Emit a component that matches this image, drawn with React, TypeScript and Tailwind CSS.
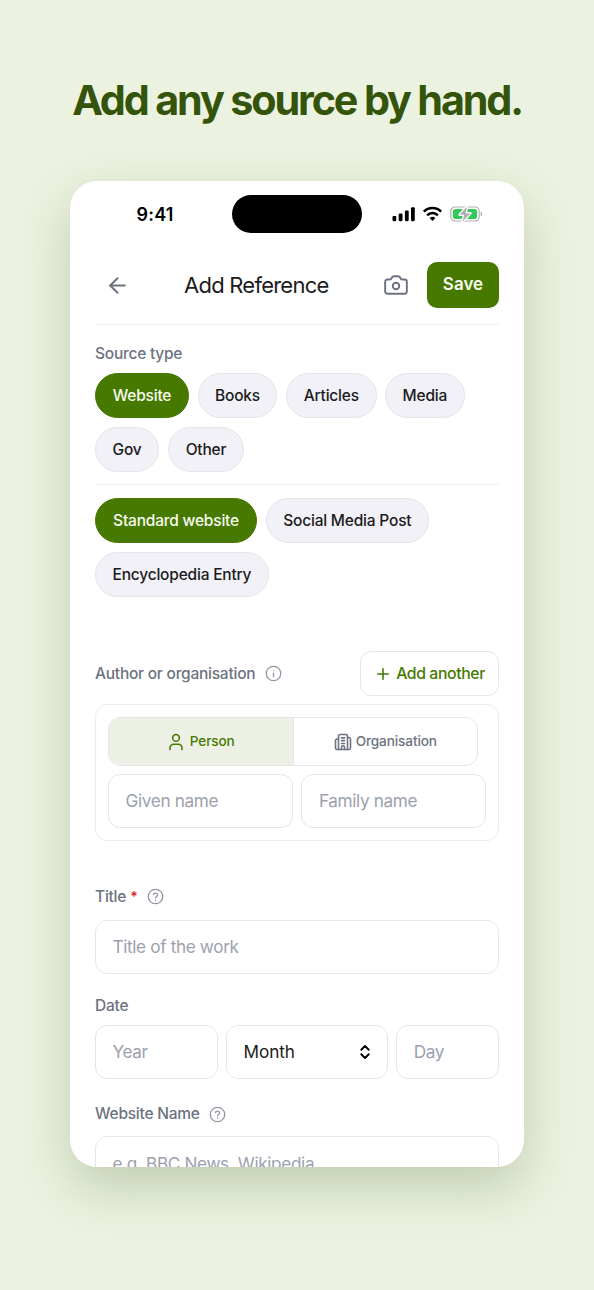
import type { ReactNode } from "react";
import { ArrowLeft, Camera, ChevronsUpDown, Plus } from "lucide-react";

function Chip({ label, className, active = false }: { label: string; className: string; active?: boolean }) {
  return (
    <button
      className={`flex h-[45px] shrink-0 items-center justify-center rounded-full border text-[15.5px] font-medium tracking-[-0.2px] whitespace-nowrap ${
        active ? "border-[#477900] bg-[#477900] text-[#f7fbef]" : "border-[#e4e4ea] bg-[#f2f1f8] text-[#1b1b20]"
      } ${className}`}
    >
      {label}
    </button>
  );
}

function Field({ children, className }: { children: ReactNode; className: string }) {
  return (
    <div
      className={`flex shrink-0 items-center rounded-[12px] border-[1.5px] border-[#e5e6e9] px-[16.5px] text-[17.2px] tracking-[-0.36px] whitespace-nowrap text-[#9ca1ae] ${className}`}
    >
      {children}
    </div>
  );
}

function Label({ children, className = "" }: { children: ReactNode; className?: string }) {
  return (
    <span className={`text-[15.5px] font-medium tracking-[-0.24px] whitespace-nowrap text-[#6c7280] ${className}`}>
      {children}
    </span>
  );
}

function HelpIcon() {
  return (
    <svg className="size-[17px]" viewBox="0 0 24 24" fill="none" stroke="#9196a2" strokeWidth="1.8" strokeLinecap="round" strokeLinejoin="round">
      <circle cx="12" cy="12" r="10.2" />
      <path d="M9.1 9.2a3 3 0 0 1 5.8 1c0 2-2.9 2.3-2.9 4" />
      <path d="M12 17.3h.01" />
    </svg>
  );
}

function InfoIcon() {
  return (
    <svg className="size-[17px]" viewBox="0 0 24 24" fill="none" stroke="#9196a2" strokeWidth="1.8" strokeLinecap="round">
      <circle cx="12" cy="12" r="10.2" />
      <path d="M12 16.5v-5M12 7.8h.01" />
    </svg>
  );
}

function PersonIcon() {
  return (
    <svg className="h-[18px] w-[18px]" viewBox="0 0 24 24" fill="none" stroke="currentColor" strokeWidth="2.1" strokeLinecap="round" strokeLinejoin="round">
      <circle cx="12" cy="6.5" r="4.5" />
      <path d="M4 22v-2a5 5 0 0 1 5-5h6a5 5 0 0 1 5 5v2" />
    </svg>
  );
}

function BuildingIcon() {
  return (
    <svg className="size-[18px]" viewBox="0 0 24 24" fill="none" stroke="currentColor" strokeWidth="2.1" strokeLinecap="round" strokeLinejoin="round">
      <path d="M6 22V4a2 2 0 0 1 2-2h8a2 2 0 0 1 2 2v18Z" />
      <path d="M6 8H4a2 2 0 0 0-2 2v10a2 2 0 0 0 2 2h2M18 6h2a2 2 0 0 1 2 2v12a2 2 0 0 1-2 2h-2M10 22v-3a2 2 0 0 1 4 0v3M10 6.5h4M10 10.2h4M10 14h4" />
    </svg>
  );
}

function StatusIcons() {
  return (
    <svg className="h-[18px] w-[92px]" viewBox="0 0 92 18">
      <rect x="0.5" y="11" width="3.8" height="5.2" rx="1.1" />
      <rect x="6.7" y="8.6" width="3.8" height="7.6" rx="1.1" />
      <rect x="12.9" y="5.4" width="3.8" height="10.8" rx="1.1" />
      <rect x="19" y="2.2" width="3.8" height="14" rx="1.1" />
      <g fill="none" stroke="#000" strokeWidth="2.5">
        <path d="M31.8 6.6a12.2 12.2 0 0 1 17.4 0" />
        <path d="M35.1 10.3a7.6 7.6 0 0 1 10.8 0" />
      </g>
      <path d="M37.6 13a4.3 4.3 0 0 1 5.8 0L40.5 16.1z" />
      <rect x="58.8" y="2" width="28.4" height="14" rx="4.4" fill="none" stroke="#b0b0b0" strokeWidth="1.2" />
      <rect x="60.9" y="4" width="24.2" height="10" rx="2.8" fill="#34c759" />
      <path d="M88.6 6.6c2.1.6 2.1 4.2 0 4.8z" fill="#b0b0b0" />
      <path d="M75 1.4 67.6 9.8h4.5L70.6 16.8 78.4 8.2H73.7z" fill="#b0b0b0" stroke="#fff" strokeWidth="2.6" strokeLinejoin="round" paintOrder="stroke" />
    </svg>
  );
}

export default function App() {
  return (
    <main className="flex h-[1290px] w-[594px] flex-col items-center overflow-hidden bg-[#ebf3e0] font-['Inter',sans-serif]">
      <h1 className="mt-[70px] h-[60px] text-[41.3px] leading-[60px] font-bold tracking-[-2.15px] whitespace-nowrap text-[#35540b]">
        Add any source by hand.
      </h1>

      <section className="mt-[51px] flex h-[986px] w-[454px] shrink-0 flex-col overflow-hidden rounded-[27px] bg-white px-[25px] shadow-[0_20px_52px_rgba(64,78,24,0.24)]">
        <div className="flex h-[66px] shrink-0 items-center">
          <span className="ml-[41.5px] w-[95.5px] text-[18px] font-semibold tracking-[0.2px] text-black">9:41</span>
          <div className="h-[38px] w-[130px] rounded-full bg-black" />
          <div className="ml-[29.5px]">
            <StatusIcons />
          </div>
        </div>

        <header className="flex h-[78px] shrink-0 items-center border-b border-[#f0f0f2] pb-[1px]">
          <ArrowLeft className="ml-[9.5px] size-[25px] text-[#6c7280]" strokeWidth={1.9} />
          <h2 className="ml-[54.5px] w-[199px] text-[22px] tracking-[-0.76px] whitespace-nowrap text-[#1b1b20]">Add Reference</h2>
          <Camera className="size-[26px] text-[#6c7280]" strokeWidth={1.8} />
          <button className="ml-auto h-[46px] w-[72px] rounded-[10px] bg-[#477900] text-[17px] font-semibold text-[#f7fbef]">Save</button>
        </header>

        <Label className="mt-[17px] h-[24px] shrink-0 leading-[24px]">Source type</Label>
        <div className="mt-[7px] flex shrink-0 flex-wrap gap-x-[8.6px] gap-y-[9px] border-b border-[#f0f0f2] pb-[12px]">
          <Chip label="Website" active className="w-[94px]" />
          <Chip label="Books" className="w-[79.8px]" />
          <Chip label="Articles" className="w-[90.6px]" />
          <Chip label="Media" className="w-[79.4px]" />
          <Chip label="Gov" className="w-[64px]" />
          <Chip label="Other" className="w-[76.8px]" />
        </div>
        <div className="mt-[13px] flex shrink-0 flex-wrap gap-x-[8.6px] gap-y-[9px]">
          <Chip label="Standard website" active className="w-[162px]" />
          <Chip label="Social Media Post" className="w-[163.4px]" />
          <Chip label="Encyclopedia Entry" className="w-[173.8px]" />
        </div>

        <div className="mt-[54px] flex h-[45px] shrink-0 items-center">
          <Label>Author or organisation</Label>
          <div className="ml-[10px]">
            <InfoIcon />
          </div>
          <button className="ml-auto flex h-[45px] w-[139px] items-center justify-center gap-[4px] rounded-[11px] border-[1.5px] border-[#e5e6e9] text-[15.8px] font-medium tracking-[-0.4px] whitespace-nowrap text-[#477900]">
            <Plus className="size-[18px]" strokeWidth={2.1} />
            Add another
          </button>
        </div>

        <div className="mt-[8px] flex h-[137px] shrink-0 flex-col rounded-[12px] border-[1.5px] border-[#ebecee] px-[12px] pt-[12px]">
          <div className="flex h-[49px] w-[370px] overflow-hidden rounded-[12px] border-[1.5px] border-[#e5e6e9] text-[13.6px] font-medium tracking-[-0.12px]">
            <div className="flex w-[184.5px] items-center justify-center gap-[5px] border-r-[1.5px] border-[#e5e6e9] bg-[#ecf0e5] text-[#477900]">
              <PersonIcon />
              Person
            </div>
            <div className="flex flex-1 items-center justify-center gap-[4px] text-[#6c7280]">
              <BuildingIcon />
              Organisation
            </div>
          </div>
          <div className="mt-[8px] flex gap-[8.4px]">
            <Field className="h-[54px] w-[185px]">Given name</Field>
            <Field className="h-[54px] w-[184.5px]">Family name</Field>
          </div>
        </div>

        <div className="mt-[43.6px] flex h-[24px] shrink-0 items-center">
          <Label>Title</Label>
          <span className="ml-[4px] w-[7px] text-[14px] font-semibold text-[#dc2828]">*</span>
          <div className="ml-[9.5px]">
            <HelpIcon />
          </div>
        </div>
        <Field className="mt-[11px] h-[54px]">Title of the work</Field>

        <Label className="mt-[20px] h-[24px] shrink-0 leading-[24px]">Date</Label>
        <div className="mt-[7.5px] flex shrink-0 gap-[8.6px]">
          <Field className="h-[54px] w-[122.5px]">Year</Field>
          <Field className="h-[54px] w-[161.5px]">
            <span className="tracking-[-0.1px] text-[#1b1b20]">Month</span>
            <ChevronsUpDown className="mr-[-4px] ml-auto size-[18px] text-black" strokeWidth={2.4} />
          </Field>
          <Field className="h-[54px] w-[103px]">Day</Field>
        </div>

        <div className="mt-[23px] flex h-[24px] shrink-0 items-center">
          <Label>Website Name</Label>
          <div className="ml-[9.5px]">
            <HelpIcon />
          </div>
        </div>
        <Field className="mt-[10px] h-[55px]">e.g. BBC News, Wikipedia</Field>
      </section>
    </main>
  );
}
